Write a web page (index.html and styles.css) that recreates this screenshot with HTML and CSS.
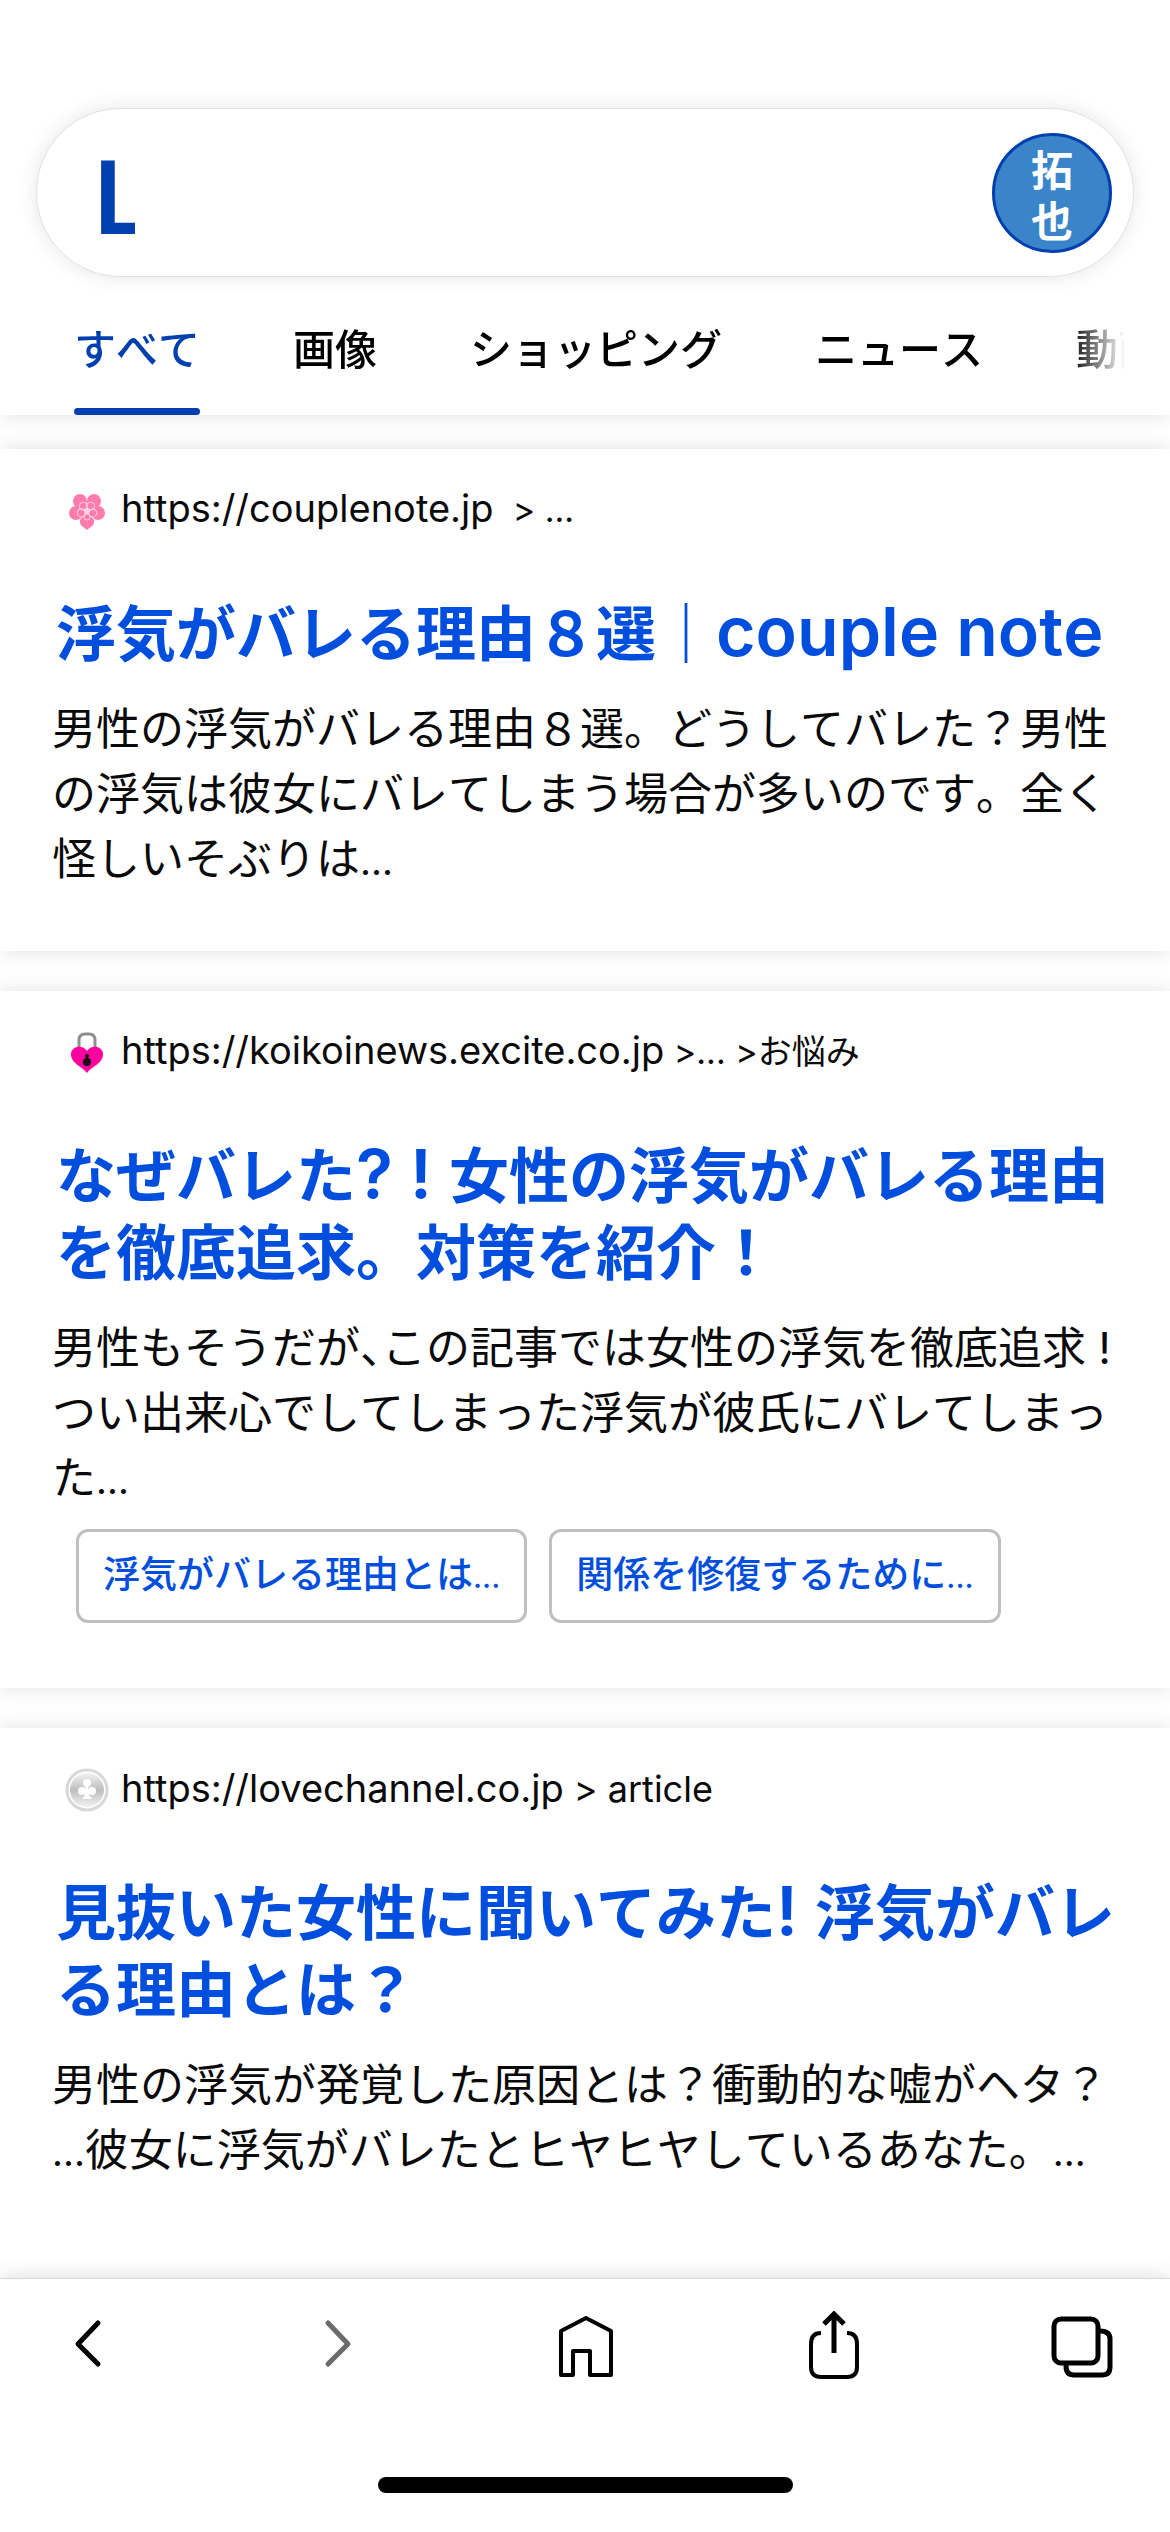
FILE: index.html
```html
<!DOCTYPE html>
<html lang="ja">
<head>
<meta charset="utf-8">
<meta name="viewport" content="width=device-width, initial-scale=1">
<title>浮気がバレる理由 - 検索結果</title>
<link rel="stylesheet" href="styles.css">
</head>
<body>
<div class="app">
  <header class="header">
    <form class="search" role="search">
      <a class="logo" href="#">L</a>
      <input class="search-input" type="search" aria-label="検索">
      <button class="avatar" type="button">拓<br>也</button>
    </form>
    <nav class="tabs">
      <a class="tab tab-active" href="#">すべて</a>
      <a class="tab" href="#">画像</a>
      <a class="tab" href="#">ショッピング</a>
      <a class="tab" href="#">ニュース</a>
      <a class="tab" href="#">動画</a>
    </nav>
  </header>

  <main class="results">
    <article class="card">
      <div class="source">
        <svg class="favicon" viewBox="0 0 44 44" aria-hidden="true">
          <g fill="#ff7bac">
            <circle cx="15" cy="12" r="7"/>
            <circle cx="29" cy="12" r="7"/>
            <circle cx="11" cy="24" r="7"/>
            <circle cx="33" cy="24" r="7"/>
            <path d="M22 22L29 31C30 37 25 38 22 41C19 38 14 37 15 31Z"/>
            <circle cx="22" cy="21" r="8"/>
          </g>
          <g fill="none" stroke="#ffd3e2">
            <circle cx="22" cy="28" r="3"/>
            <circle cx="22" cy="28" r="4" transform="rotate(72 22 22)"/>
            <circle cx="22" cy="28" r="4" transform="rotate(144 22 22)"/>
            <circle cx="22" cy="28" r="4" transform="rotate(216 22 22)"/>
            <circle cx="22" cy="28" r="4" transform="rotate(288 22 22)"/>
          </g>
          <circle cx="22" cy="22" r="3" fill="#ffd3e2"/>
        </svg>
        <span class="url">https://couplenote.jp<span class="crumb"> &nbsp;&gt; ...</span></span>
      </div>
      <h2 class="title"><a href="#">浮気がバレる理由８選｜<span class="latin">couple note</span></a></h2>
      <p class="desc">男性の浮気がバレる理由８選。どうしてバレた？男性<br>の浮気は彼女にバレてしまう場合が多いのです。全く<br>怪しいそぶりは<span class="dots">...</span></p>
    </article>

    <article class="card">
      <div class="source">
        <svg class="favicon" viewBox="0 0 44 44" aria-hidden="true">
          <path d="M14 20V9Q14 3 20 3H24Q30 3 30 9V20" fill="none" stroke="#8e8e8e" stroke-width="3"/>
          <path d="M22 42C17 35 6 33 6 23C6 15 18 13 22 20C26 13 38 15 38 23C38 33 27 35 22 42Z" fill="#ff00a0"/>
          <circle cx="22" cy="25" r="2" fill="#111"/>
          <ellipse cx="22" cy="31" rx="4" ry="4" fill="#111"/>
          <path d="M21 24H23V30H21Z" fill="#111"/>
        </svg>
        <span class="url">https://koikoinews.excite.co.jp<span class="crumb"> &gt;... &gt;お悩み</span></span>
      </div>
      <h2 class="title"><a href="#">なぜバレた<span class="latin">? ! </span>女性の浮気がバレる理由<br>を徹底追求。対策を紹介！</a></h2>
      <p class="desc">男性もそうだが<span class="half">、</span>この記事では女性の浮気を徹底追求 !<br>つい出来心でしてしまった浮気が彼氏にバレてしまっ<br>た<span class="dots">...</span></p>
      <div class="chips">
        <a class="chip" href="#">浮気がバレる理由とは<span class="dots">...</span></a>
        <a class="chip" href="#">関係を修復するために<span class="dots">...</span></a>
      </div>
    </article>

    <article class="card">
      <div class="source">
        <svg class="favicon" viewBox="0 0 44 44" aria-hidden="true">
          <defs>
            <linearGradient id="coin" x1="0" y1="0" x2="0" y2="1">
              <stop offset="0" stop-color="#f2f2f2"/>
              <stop offset=".5" stop-color="#bdbdbd"/>
              <stop offset="1" stop-color="#f2f2f2"/>
            </linearGradient>
          </defs>
          <circle cx="22" cy="22" r="20" fill="#fff" stroke="#d8d8d8" stroke-width="3"/>
          <circle cx="22" cy="22" r="17" fill="url(#coin)"/>
          <g fill="#fff">
            <circle cx="22" cy="15" r="4"/>
            <circle cx="17" cy="23" r="4"/>
            <circle cx="27" cy="23" r="4"/>
            <path d="M21 16H23L24 27L27 31H17L20 27Z"/>
          </g>
        </svg>
        <span class="url">https://lovechannel.co.jp<span class="path"> &gt; article</span></span>
      </div>
      <h2 class="title"><a href="#">見抜いた女性に聞いてみた<span class="latin">! </span>浮気がバレ<br>る理由とは？</a></h2>
      <p class="desc">男性の浮気が発覚した原因とは？衝動的な嘘がヘタ？<br><span class="dots">...</span>彼女に浮気がバレたとヒヤヒヤしているあなた。<span class="dots">...</span></p>
    </article>
  </main>

  <footer class="toolbar">
    <nav class="tools">
      <button class="tool" type="button" aria-label="戻る">
        <svg class="icon" viewBox="0 0 72 72" aria-hidden="true"><path d="M46 12L26 33L46 53" stroke-width="5"/></svg>
      </button>
      <button class="tool" type="button" aria-label="進む" disabled>
        <svg class="icon" viewBox="0 0 72 72" aria-hidden="true"><path d="M27 12L47 33L27 53" stroke-width="5"/></svg>
      </button>
      <button class="tool" type="button" aria-label="ホーム">
        <svg class="icon" viewBox="0 0 72 72" aria-hidden="true"><path d="M12 20L37 7L62 20V64H41V40H24V64H12Z" stroke-width="4"/></svg>
      </button>
      <button class="tool" type="button" aria-label="共有">
        <svg class="icon" viewBox="0 0 72 72" aria-hidden="true"><g stroke-linecap="butt" stroke-linejoin="miter"><path d="M23 22Q13 22 13 33V56Q13 66 23 66H49Q59 66 59 56V33Q59 22 49 22" stroke-width="4"/><path d="M36 42V4M26 13L36 3L46 13" stroke-width="5"/></g></svg>
      </button>
      <button class="tool" type="button" aria-label="タブ一覧">
        <svg class="icon" viewBox="0 0 72 72" aria-hidden="true"><path d="M20 55Q20 64 28 64H56Q64 64 64 56V28Q64 20 54 20" stroke-width="5"/><rect x="8" y="8" width="44" height="44" rx="7" stroke-width="5"/></svg>
      </button>
    </nav>
    <div class="home-bar"></div>
  </footer>
</div>
</body>
</html>
```
FILE: styles.css
```css
* {
  box-sizing: border-box;
}

body {
  margin: 0;
  background: #fff;
  color: #0a0a0a;
  font-family: "Inter", "Noto Sans CJK JP", sans-serif;
  font-kerning: none;
}

a {
  color: inherit;
  text-decoration: none;
}

.app {
  display: flex;
  flex-direction: column;
  min-height: 100vh;
}

/* Header */

.header {
  padding-top: 108px;
  background: #fff;
  box-shadow: 0 0 20px rgba(0, 0, 0, 0.12);
}

.search {
  display: flex;
  align-items: center;
  height: 169px;
  margin: 0 36px;
  padding: 0 21px 0 56px;
  border: 1px solid #e2e2e2;
  border-radius: 85px;
  background: #fff;
  box-shadow: 0 0 20px rgba(0, 0, 0, 0.1);
}

/* The mark has a short foot, so the letter's box ends before its full width */
.logo {
  flex: none;
  width: 42px;
  padding-top: 4px;
  overflow: hidden;
  color: #003fae;
  font-family: "Lato", sans-serif;
  font-size: 101px;
  font-weight: 700;
  line-height: 120px;
}

.search-input {
  flex: 1;
  min-width: 0;
  height: 100px;
  border: 0;
  outline: 0;
  background: transparent;
  font: inherit;
  font-size: 44px;
}

.avatar {
  width: 120px;
  height: 120px;
  padding: 0;
  border: 3px solid #003fae;
  border-radius: 50%;
  background: #3a85c9;
  color: #fff;
  font-family: "Noto Sans CJK JP", sans-serif;
  font-size: 42px;
  font-weight: 700;
  line-height: 51px;
}

.tabs {
  display: flex;
  gap: 93px;
  height: 138px;
  margin-right: 45px;
  padding-left: 74px;
  overflow: hidden;
  color: #000;
  font-size: 42px;
  font-weight: 500;
  line-height: 60px;
  white-space: nowrap;
  mask-image: linear-gradient(to left, transparent, #000 56px);
}

.tab {
  display: flex;
  flex: none;
  flex-direction: column;
  justify-content: space-between;
  padding-top: 43px;
}

.tab-active {
  color: #003fae;
}

.tab-active::after {
  height: 7px;
  border-radius: 4px;
  background: #003fae;
  content: "";
}

/* Results */

.results {
  display: flex;
  flex: 1;
  flex-direction: column;
  gap: 40px;
  padding-top: 34px;
}

.card {
  padding: 36px 52px 57px;
  background: #fff;
  box-shadow: 0 0 20px rgba(0, 0, 0, 0.12);
}

.card:last-child {
  flex: 1;
}

.source {
  display: flex;
  align-items: center;
  gap: 12px;
  height: 52px;
  margin-left: 13px;
}

.favicon {
  flex: none;
  width: 44px;
  height: 44px;
}

.url {
  padding-bottom: 4px;
  font-size: 38px;
  font-kerning: normal;
  line-height: 46px;
  white-space: nowrap;
}

.crumb {
  font-size: 34px;
}

.path {
  font-size: 36px;
}

.title {
  margin: 59px 0 0 4px;
  color: #004edd;
  font-size: 60px;
  font-weight: 600;
  line-height: 77px;
  white-space: nowrap;
}

.latin {
  font-size: 68px;
  line-height: 60px;
}

.desc {
  margin: 24px 0 0;
  font-size: 44px;
  line-height: 65px;
  white-space: nowrap;
}

.half {
  font-feature-settings: "halt";
}

.desc .dots {
  font-size: 38px;
}

.chips {
  display: flex;
  gap: 22px;
  margin: 16px 0 8px 24px;
}

.chip {
  padding: 0 24px;
  border: 3px solid #bfbfbf;
  border-radius: 12px;
  color: #004edd;
  font-size: 37px;
  font-weight: 500;
  line-height: 86px;
}

.chip .dots {
  font-size: 30px;
}

/* Bottom toolbar */

.toolbar {
  display: flex;
  flex-direction: column;
  align-items: center;
  justify-content: space-between;
  height: 254px;
  padding: 32px 0 39px;
  border-top: 1px solid #d8d8d8;
  background: #fff;
  box-shadow: 0 0 20px rgba(0, 0, 0, 0.15);
}

.tools {
  display: flex;
  align-self: stretch;
  justify-content: space-between;
  padding: 0 52px;
}

.tool {
  padding: 0;
  border: 0;
  background: none;
  color: #000;
}

.tool:disabled {
  color: #6b6b6b;
}

.icon {
  display: block;
  width: 72px;
  height: 72px;
  fill: none;
  stroke: currentColor;
  stroke-linecap: round;
  stroke-linejoin: round;
}

.home-bar {
  width: 415px;
  height: 16px;
  border-radius: 8px;
  background: #000;
}
```
